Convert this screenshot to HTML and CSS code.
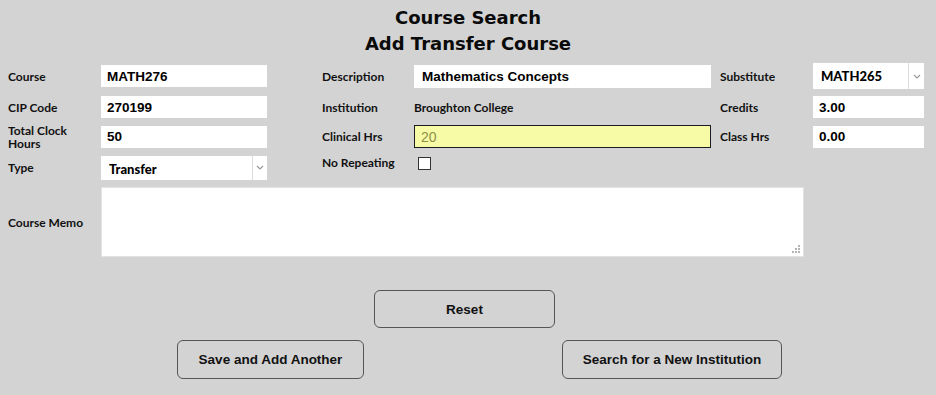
FILE: index.html
```html
<!DOCTYPE html>
<html lang="en">
<head>
<meta charset="utf-8">
<title>Course Search - Add Transfer Course</title>
<link rel="stylesheet" href="styles.css">
</head>
<body>
<div class="page">
  <h1 class="title">Course Search<br>Add Transfer Course</h1>

  <form class="form">
    <label class="lbl">Course</label>
    <input class="field c2" type="text" value="MATH276">
    <label class="lbl c4">Description</label>
    <input class="field c5 tall" type="text" value="Mathematics Concepts">
    <label class="lbl c7">Substitute</label>
    <div class="select c8 sub">
      <span class="select-text">MATH265</span>
      <span class="arrow"><svg width="8" height="5" viewBox="0 0 8 5"><path d="M1 1 L4 4 L7 1" fill="none" stroke="#9a9a9a" stroke-width="1.2"/></svg></span>
    </div>

    <label class="lbl">CIP Code</label>
    <input class="field c2" type="text" value="270199">
    <label class="lbl c4">Institution</label>
    <span class="value c5">Broughton College</span>
    <label class="lbl c7">Credits</label>
    <input class="field c8" type="text" value="3.00">

    <label class="lbl">Total Clock Hours</label>
    <input class="field c2" type="text" value="50">
    <label class="lbl c4">Clinical Hrs</label>
    <input class="field c5 clinical" type="text" value="20" readonly>
    <label class="lbl c7">Class Hrs</label>
    <input class="field c8" type="text" value="0.00">

    <label class="lbl">Type</label>
    <div class="select c2 type">
      <span class="select-text">Transfer</span>
      <span class="arrow"><svg width="8" height="5" viewBox="0 0 8 5"><path d="M1 1 L4 4 L7 1" fill="none" stroke="#9a9a9a" stroke-width="1.2"/></svg></span>
    </div>
    <label class="lbl c4 top-lbl">No Repeating</label>
    <span class="c5 check-cell"><input class="check" type="checkbox"></span>

    <label class="lbl">Course Memo</label>
    <div class="memo">
      <textarea class="memo-area"></textarea>
      <svg class="grip" width="9" height="9" viewBox="0 0 9 9"><g fill="#b4b4b4"><rect x="6" y="0" width="2" height="2"/><rect x="3" y="3" width="2" height="2"/><rect x="6" y="3" width="2" height="2"/><rect x="0" y="6" width="2" height="2"/><rect x="3" y="6" width="2" height="2"/><rect x="6" y="6" width="2" height="2"/></g></svg>
    </div>
  </form>

  <div class="actions">
    <div class="row-reset">
      <button class="btn reset" type="button">Reset</button>
    </div>
    <div class="row-main">
      <button class="btn save" type="button">Save and Add Another</button>
      <button class="btn search" type="button">Search for a New Institution</button>
    </div>
  </div>
</div>
</body>
</html>
```

FILE: styles.css
```css
html, body {
  margin: 0;
  padding: 0;
  background: #d3d3d3;
}

.page {
  width: 936px;
  height: 395px;
  padding-left: 8px;
  box-sizing: border-box;
  font-family: Lato, "Liberation Sans", sans-serif;
  color: #111;
}

.title {
  margin: 0 0 6px -8px;
  padding-top: 5px;
  text-align: center;
  font-family: "DejaVu Sans", sans-serif;
  font-weight: bold;
  font-size: 18px;
  line-height: 26px;
  color: #0a0a0a;
}

.form {
  display: grid;
  grid-template-columns: 93px 166px 55px 92px 297px 9px 93px 111px;
  grid-template-rows: 26px 36px 23px 39px 70px;
  align-items: center;
  margin: 0;
}

.lbl {
  grid-column: 1;
  font-family: Lato, sans-serif;
  font-weight: bold;
  font-size: 12px;
  line-height: 13px;
  color: #111;
}

.c2 { grid-column: 2; }
.c4 { grid-column: 4; }
.c5 { grid-column: 5; }
.c7 { grid-column: 7; }
.c8 { grid-column: 8; }

.field {
  box-sizing: border-box;
  height: 22px;
  width: 100%;
  margin: 0;
  border: none;
  background: #fff;
  padding: 0 6px;
  font-family: "Liberation Sans", Arial, sans-serif;
  font-weight: bold;
  font-size: 13.5px;
  color: #000;
  outline: none;
}

.field.tall {
  height: 23px;
  padding-left: 8px;
}

.field.clinical {
  height: 23px;
  border: 1px solid #1b1b24;
  background: #f8fba6;
  color: #8e8f47;
  font-weight: normal;
  font-size: 14px;
  padding-left: 6px;
}

.value {
  font-family: Lato, sans-serif;
  font-weight: bold;
  font-size: 12px;
  line-height: 13px;
  color: #111;
}

.select {
  display: flex;
  align-items: stretch;
  background: #fff;
  box-sizing: border-box;
}

.select.type { height: 24px; }
.select.sub { height: 26px; }

.select-text {
  flex: 1;
  display: flex;
  align-items: center;
  padding-left: 8px;
  font-family: Lato, sans-serif;
  font-weight: 900;
  font-size: 13px;
  color: #000;
}

.select.type .select-text { padding-top: 2px; }

.arrow {
  width: 14px;
  border-left: 1px solid #dcdcdc;
  display: flex;
  align-items: center;
  justify-content: center;
}

.select.sub .arrow { width: 15px; }

.top-lbl {
  align-self: start;
  margin-top: 8px;
}

.check-cell {
  align-self: start;
  margin-top: 9px;
  padding-left: 4px;
  height: 13px;
}

.check {
  appearance: none;
  -webkit-appearance: none;
  display: block;
  width: 13px;
  height: 13px;
  margin: 0;
  box-sizing: border-box;
  border: 1px solid #333;
  background: #fff;
}

.memo {
  grid-column: 2 / -1;
  position: relative;
  width: 703px;
  height: 70px;
  align-self: stretch;
}

.memo-area {
  display: block;
  box-sizing: border-box;
  width: 100%;
  height: 100%;
  margin: 0;
  border: 1px solid #e2e2e2;
  background: #fff;
  resize: none;
  outline: none;
}

.grip {
  position: absolute;
  right: 3px;
  bottom: 3px;
}

.actions {
  margin-top: 33px;
}

.row-reset {
  display: flex;
  padding-left: 366px;
}

.row-main {
  display: flex;
  margin-top: 12px;
  padding-left: 169px;
  gap: 198px;
}

.btn {
  box-sizing: border-box;
  background: #d3d3d3;
  border: 1px solid #555;
  border-radius: 6px;
  font-family: "Liberation Sans", Arial, sans-serif;
  font-weight: bold;
  font-size: 13.5px;
  color: #111;
  padding: 0;
  cursor: pointer;
}

.reset {
  width: 181px;
  height: 38px;
}

.save {
  width: 187px;
  height: 39px;
}

.search {
  width: 220px;
  height: 39px;
}
```
